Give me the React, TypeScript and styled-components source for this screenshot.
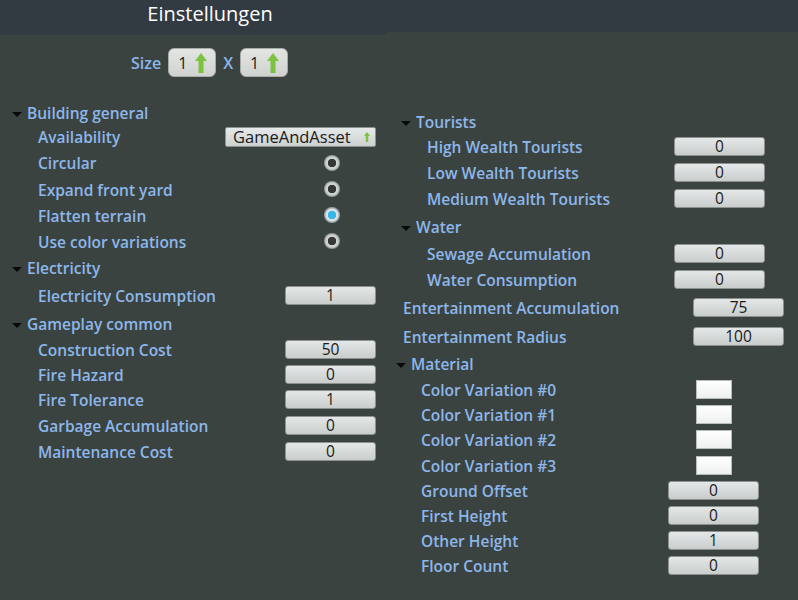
import React from "react";
import styled, { createGlobalStyle } from "styled-components";

const Global = createGlobalStyle`
  html, body { margin: 0; padding: 0; }
  body {
    background: #3b4341;
    font-family: "Open Sans", "Noto Sans", sans-serif;
    width: 798px;
    height: 600px;
    overflow: hidden;
  }
`;

const Page = styled.div`
  width: 798px;
  height: 600px;
  background: #3b4341;
  display: flex;
  flex-direction: column;
`;

const Header = styled.div`
  display: flex;
  align-items: flex-start;
`;

const TitleTab = styled.div`
  width: 388px;
  height: 35px;
  background: #323a42;
  border-bottom-right-radius: 6px;
  display: flex;
  justify-content: center;
`;

const Title = styled.h1`
  margin: 0 0 0 32px;
  font-size: 20px;
  font-weight: 400;
  line-height: 27px;
  color: #ffffff;
`;

const HeaderRest = styled.div`
  flex: 1;
  height: 32px;
  background: #323a42;
`;

const SizeRow = styled.div`
  display: flex;
  align-items: center;
  gap: 7px;
  margin-top: 13px;
  padding-left: 131px;
  height: 29px;
`;

const BlueText = styled.span`
  color: #8db7ea;
  font-size: 16px;
  font-weight: 600;
`;

const SizeBox = styled.div`
  width: 48px;
  height: 29px;
  box-sizing: border-box;
  border-radius: 6px;
  background: linear-gradient(#e4e6e3, #cfd2cf);
  border: 1px solid #a9aca9;
  display: flex;
  align-items: center;
  justify-content: space-between;
  padding: 0 8px 0 9px;
  color: #1c1c1c;
  font-size: 16px;
`;

const Columns = styled.div`
  display: flex;
  margin-top: 23px;
`;

const Column = styled.div<{ $w?: number; $top: number }>`
  ${(p) => (p.$w ? `width: ${p.$w}px;` : "flex: 1;")}
  padding-top: ${(p) => p.$top}px;
  display: flex;
  flex-direction: column;
`;

const GroupRow = styled.div<{ $h: number; $x: number }>`
  height: ${(p) => p.$h}px;
  display: flex;
  align-items: center;
  gap: 5px;
  padding-left: ${(p) => p.$x}px;
`;

const Triangle = styled.span`
  width: 0;
  height: 0;
  border-left: 5px solid transparent;
  border-right: 5px solid transparent;
  border-top: 5px solid #0a0a0a;
  margin-top: 4px;
`;

const Label = styled.span`
  color: #8db7ea;
  font-size: 15.5px;
  font-weight: 600;
  line-height: 20px;
  margin-top: 1px;
  white-space: nowrap;
`;

const PropRow = styled.div<{ $h: number; $x: number; $col: number }>`
  height: ${(p) => p.$h}px;
  display: grid;
  grid-template-columns: ${(p) => p.$col}px auto;
  align-items: center;
  padding-left: ${(p) => p.$x}px;
`;

const NumBox = styled.div`
  width: 91px;
  height: 19px;
  box-sizing: border-box;
  border-radius: 3px;
  border: 1px solid #8d9291;
  background: linear-gradient(#e3e7e7, #c9cecd);
  color: #1a1a1a;
  font-size: 15.5px;
  line-height: 17px;
  text-align: center;
`;

const Dropdown = styled.div`
  width: 151px;
  height: 20px;
  box-sizing: border-box;
  border-radius: 2px;
  border: 1px solid #8d9291;
  background: linear-gradient(#e6e9e9, #cdd1d0);
  color: #1a1a1a;
  font-size: 16.5px;
  line-height: 18px;
  padding-left: 7px;
  display: flex;
  align-items: center;
  justify-content: space-between;
  padding-right: 5px;
`;

const Radio = styled.div<{ $on?: boolean }>`
  width: 16px;
  height: 16px;
  box-sizing: border-box;
  border-radius: 50%;
  background: ${(p) =>
    p.$on
      ? "radial-gradient(circle, #36b7ea 0 4px, #d7e3ea 4.5px 6px, #9ca3a6 7px)"
      : "radial-gradient(circle, #363838 0 4px, #cfd2d2 4.5px 6px, #959a9a 7.5px)"};
`;

const Swatch = styled.div`
  width: 36px;
  height: 19px;
  box-sizing: border-box;
  border: 1px solid #b7bcbc;
  background: linear-gradient(#ffffff, #eef0f0);
`;

const Arrow = ({ w, h }: { w: number; h: number }) => (
  <svg width={w} height={h} viewBox="0 0 12 20">
    <path d="M6 0 L12 8 L8.5 8 L8.5 20 L3.5 20 L3.5 8 L0 8 Z" fill="#7ec242" />
  </svg>
);

type Item =
  | { kind: "group"; label: string; h: number; x: number }
  | { kind: "num"; label: string; h: number; x: number; col: number; value: string }
  | { kind: "radio"; label: string; h: number; x: number; col: number; on?: boolean }
  | { kind: "drop"; label: string; h: number; x: number; col: number; value: string }
  | { kind: "swatch"; label: string; h: number; x: number; col: number };

const left: Item[] = [
  { kind: "group", label: "Building general", h: 24, x: 12 },
  { kind: "drop", label: "Availability", h: 25, x: 38, col: 187, value: "GameAndAsset" },
  { kind: "radio", label: "Circular", h: 27, x: 38, col: 286 },
  { kind: "radio", label: "Expand front yard", h: 26, x: 38, col: 286 },
  { kind: "radio", label: "Flatten terrain", h: 26, x: 38, col: 286, on: true },
  { kind: "radio", label: "Use color variations", h: 26, x: 38, col: 286 },
  { kind: "group", label: "Electricity", h: 27, x: 12 },
  { kind: "num", label: "Electricity Consumption", h: 28, x: 38, col: 247, value: "1" },
  { kind: "group", label: "Gameplay common", h: 28, x: 12 },
  { kind: "num", label: "Construction Cost", h: 25, x: 38, col: 247, value: "50" },
  { kind: "num", label: "Fire Hazard", h: 25, x: 38, col: 247, value: "0" },
  { kind: "num", label: "Fire Tolerance", h: 25, x: 38, col: 247, value: "1" },
  { kind: "num", label: "Garbage Accumulation", h: 26, x: 38, col: 247, value: "0" },
  { kind: "num", label: "Maintenance Cost", h: 26, x: 38, col: 247, value: "0" },
];

const right: Item[] = [
  { kind: "group", label: "Tourists", h: 26, x: 11 },
  { kind: "num", label: "High Wealth Tourists", h: 25, x: 37, col: 247, value: "0" },
  { kind: "num", label: "Low Wealth Tourists", h: 26, x: 37, col: 247, value: "0" },
  { kind: "num", label: "Medium Wealth Tourists", h: 27, x: 37, col: 247, value: "0" },
  { kind: "group", label: "Water", h: 28, x: 11 },
  { kind: "num", label: "Sewage Accumulation", h: 26, x: 37, col: 247, value: "0" },
  { kind: "num", label: "Water Consumption", h: 27, x: 37, col: 247, value: "0" },
  { kind: "num", label: "Entertainment Accumulation", h: 29, x: 13, col: 290, value: "75" },
  { kind: "num", label: "Entertainment Radius", h: 28, x: 13, col: 290, value: "100" },
  { kind: "group", label: "Material", h: 26, x: 6 },
  { kind: "swatch", label: "Color Variation #0", h: 26, x: 31, col: 275 },
  { kind: "swatch", label: "Color Variation #1", h: 25, x: 31, col: 275 },
  { kind: "swatch", label: "Color Variation #2", h: 25, x: 31, col: 275 },
  { kind: "swatch", label: "Color Variation #3", h: 26, x: 31, col: 275 },
  { kind: "num", label: "Ground Offset", h: 25, x: 31, col: 247, value: "0" },
  { kind: "num", label: "First Height", h: 25, x: 31, col: 247, value: "0" },
  { kind: "num", label: "Other Height", h: 25, x: 31, col: 247, value: "1" },
  { kind: "num", label: "Floor Count", h: 25, x: 31, col: 247, value: "0" },
];

function renderItem(it: Item, i: number) {
  if (it.kind === "group") {
    return (
      <GroupRow key={i} $h={it.h} $x={it.x}>
        <Triangle />
        <Label>{it.label}</Label>
      </GroupRow>
    );
  }
  let control: React.ReactNode = null;
  if (it.kind === "num") control = <NumBox>{it.value}</NumBox>;
  if (it.kind === "radio") control = <Radio $on={it.on} />;
  if (it.kind === "swatch") control = <Swatch />;
  if (it.kind === "drop")
    control = (
      <Dropdown>
        <span>{it.value}</span>
        <Arrow w={6} h={12} />
      </Dropdown>
    );
  return (
    <PropRow key={i} $h={it.h} $x={it.x} $col={it.col}>
      <Label>{it.label}</Label>
      {control}
    </PropRow>
  );
}

export default function App() {
  return (
    <Page>
      <Global />
      <Header>
        <TitleTab>
          <Title>Einstellungen</Title>
        </TitleTab>
        <HeaderRest />
      </Header>
      <SizeRow>
        <BlueText>Size</BlueText>
        <SizeBox>
          <span>1</span>
          <Arrow w={12} h={20} />
        </SizeBox>
        <BlueText>X</BlueText>
        <SizeBox>
          <span>1</span>
          <Arrow w={12} h={20} />
        </SizeBox>
      </SizeRow>
      <Columns>
        <Column $w={390} $top={0}>
          {left.map(renderItem)}
        </Column>
        <Column $top={8}>{right.map(renderItem)}</Column>
      </Columns>
    </Page>
  );
}
